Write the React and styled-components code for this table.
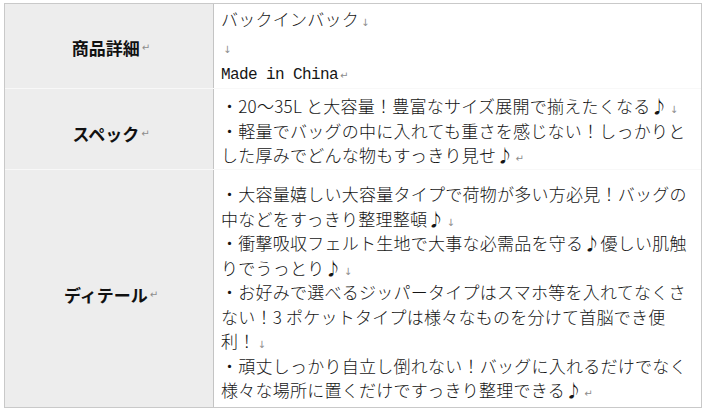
import styled, { createGlobalStyle } from 'styled-components';

const GlobalStyle = createGlobalStyle`
    html, body {
        margin: 0;
        padding: 0;
        background: #ffffff;
    }
    body {
        font-family: "Noto Sans CJK JP", "Noto Sans", sans-serif;
        color: #111;
    }
`

const Page = styled.main`
    padding: 3px 0 0 4px;
`

const SpecTable = styled.section`
    box-sizing: border-box;
    width: 698px;
    border: 1px solid #c9c9c9;
    display: flex;
    flex-direction: column;
`

const Row = styled.div`
    box-sizing: border-box;
    display: grid;
    grid-template-columns: 209px 1fr;
    height: ${props => props.$height}px;
    border-bottom: ${props => props.$last ? 'none' : '1px solid #f8f8f8'};
`

const HeadCell = styled.div`
    box-sizing: border-box;
    background: #ededed;
    border-right: 1px solid #c4c4c4;
    display: flex;
    align-items: center;
    justify-content: center;
    padding: ${props => props.$shift || 0}px 0 0 4px;
    font-size: 17px;
    font-weight: 700;
    letter-spacing: 0;
    white-space: nowrap;
`

const BodyCell = styled.div`
    box-sizing: border-box;
    background: #ffffff;
    padding: ${props => props.$top || 0}px 0 0 7px;
    font-size: 17px;
    font-weight: 300;
    letter-spacing: 0.25px;
    color: #151515;
`

const Line = styled.div`
    height: ${props => props.$lh || 24.5}px;
    line-height: ${props => props.$lh || 24.5}px;
    white-space: nowrap;
`

const Latin = styled.span`
    font-family: "Liberation Mono", monospace;
    font-size: 16px;
    letter-spacing: -0.6px;
`

// 段落記号（↵）と改行記号（↓）
const Mark = styled.span`
    font-family: "DejaVu Sans", sans-serif;
    font-size: 10px;
    font-weight: 400;
    color: #8c8c8c;
    margin-left: 2px;
    letter-spacing: 0;
`

const Br = () => <Mark>↓</Mark>
const Para = () => <Mark>↵</Mark>

const rows = [
    {
        title: '商品詳細',
        height: 85,
        shift: 3,
        top: 2,
        lh: 26.5,
        lines: [
            <>バックインバック<Br /></>,
            <Br />,
            <><Latin>Made in China</Latin><Para /></>,
        ],
    },
    {
        title: 'スペック',
        height: 81,
        shift: 9,
        top: 5,
        lines: [
            <>・20～35L と大容量！豊富なサイズ展開で揃えたくなる♪<Br /></>,
            <>・軽量でバッグの中に入れても重さを感じない！しっかりと</>,
            <>した厚みでどんな物もすっきり見せ♪<Para /></>,
        ],
    },
    {
        title: 'ディテール',
        height: 231,
        shift: 16,
        top: 12,
        lines: [
            <>・大容量嬉しい大容量タイプで荷物が多い方必見！バッグの</>,
            <>中などをすっきり整理整頓♪<Br /></>,
            <>・衝撃吸収フェルト生地で大事な必需品を守る♪優しい肌触</>,
            <>りでうっとり♪<Br /></>,
            <>・お好みで選べるジッパータイプはスマホ等を入れてなくさ</>,
            <>ない！3 ポケットタイプは様々なものを分けて首脳でき便</>,
            <>利！<Br /></>,
            <>・頑丈しっかり自立し倒れない！バッグに入れるだけでなく</>,
            <>様々な場所に置くだけですっきり整理できる♪<Para /></>,
        ],
    },
]

export default function App() {
    return (
        <>
            <GlobalStyle />
            <Page>
                <SpecTable>
                    {rows.map(row => (
                        <Row key={row.title} $height={row.height}>
                            <HeadCell $shift={row.shift}>{row.title}<Para /></HeadCell>
                            <BodyCell $top={row.top}>
                                {row.lines.map((line, i) => (
                                    <Line key={i} $lh={row.lh}>{line}</Line>
                                ))}
                            </BodyCell>
                        </Row>
                    ))}
                    {/* 表の下の空き行 */}
                    <Row $height={6} $last>
                        <HeadCell />
                        <BodyCell />
                    </Row>
                </SpecTable>
            </Page>
        </>
    )
}
